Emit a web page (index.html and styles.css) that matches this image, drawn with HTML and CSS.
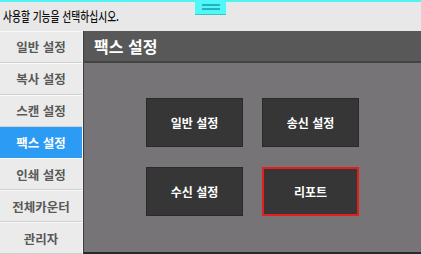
FILE: index.html
```html
<!DOCTYPE html>
<html lang="ko">
<head>
  <meta charset="UTF-8">
  <meta name="viewport" content="width=device-width, initial-scale=1.0">
  <title>팩스 설정</title>
  <link rel="stylesheet" href="styles.css">
</head>
<body>
  <div class="topbar">
    <span class="message">사용할 기능을 선택하십시오.</span>
    <div class="handle"><span></span><span></span></div>
  </div>

  <div class="main">
    <ul class="sidebar">
      <li>일반 설정</li>
      <li>복사 설정</li>
      <li>스캔 설정</li>
      <li class="active">팩스 설정</li>
      <li>인쇄 설정</li>
      <li>전체카운터</li>
      <li>관리자</li>
    </ul>

    <div class="panel">
      <div class="panel-title">팩스 설정</div>
      <div class="panel-body">
        <div class="grid">
          <button class="tile">일반 설정</button>
          <button class="tile">송신 설정</button>
          <button class="tile">수신 설정</button>
          <button class="tile selected">리포트</button>
        </div>
      </div>
    </div>
  </div>
</body>
</html>
```

FILE: styles.css
```css
* {
  box-sizing: border-box;
}
body {
  margin: 0;
  padding: 0;
  width: 421px;
  height: 254px;
  overflow: hidden;
  font-family: "Noto Sans CJK KR", "Noto Sans", sans-serif;
  background-color: #e8e8e8;
}
.topbar {
  position: relative;
  height: 31px;
  background-color: #e8e8e8;
  border-top: 2px solid #4ef3f3;
}
.message {
  display: inline-block;
  margin: 1px 0 0 3px;
  font-size: 13px;
  font-weight: 500;
  line-height: 14px;
  color: #111;
  transform: scaleX(0.75);
  transform-origin: left center;
}
.handle {
  position: absolute;
  top: -2px;
  left: 195px;
  width: 31px;
  height: 15px;
  background-color: #4ef8f8;
  border-bottom: 1px solid #3ac4c4;
  display: flex;
  flex-direction: column;
  justify-content: center;
  align-items: center;
  gap: 2px;
}
.handle span {
  display: block;
  width: 18px;
  height: 2px;
  background-color: #2ab0b8;
}
.main {
  display: flex;
  height: 223px;
}
.sidebar {
  list-style: none;
  margin: 0;
  padding: 0;
  width: 82px;
  display: flex;
  flex-direction: column;
}
.sidebar li {
  flex: 1;
  display: flex;
  align-items: center;
  justify-content: center;
  background-color: #ebebeb;
  border-top: 1px solid #fafafa;
  border-bottom: 1px solid #cfcfcf;
  color: #595959;
  font-size: 12.5px;
  font-weight: bold;
}
.sidebar li.active {
  background-color: #2c9bf4;
  border-color: #2c9bf4;
  color: #fff;
}
.panel {
  flex: 1;
  display: flex;
  flex-direction: column;
  border-left: 1px solid #f4f4f4;
}
.panel-title {
  height: 32px;
  padding: 0 0 0 10px;
  display: flex;
  align-items: center;
  background-color: #585858;
  border-left: 1px solid #3c3c3c;
  border-bottom: 2px solid #444;
  color: #fff;
  font-size: 16px;
  font-weight: bold;
}
.panel-body {
  flex: 1;
  background-color: #767476;
  border-left: 1px solid #3c3c3c;
  border-bottom: 2px solid #2a2a2a;
  padding: 35px 0 0 62px;
}
.grid {
  display: grid;
  grid-template-columns: 97px 97px;
  grid-auto-rows: 49px;
  column-gap: 19px;
  row-gap: 20px;
}
.tile {
  margin: 0;
  background-color: #363636;
  border: 1px solid #2a2a2a;
  color: #fff;
  font-family: inherit;
  font-size: 12px;
  font-weight: bold;
}
.tile.selected {
  border: 2px solid #e41e1e;
}
```
